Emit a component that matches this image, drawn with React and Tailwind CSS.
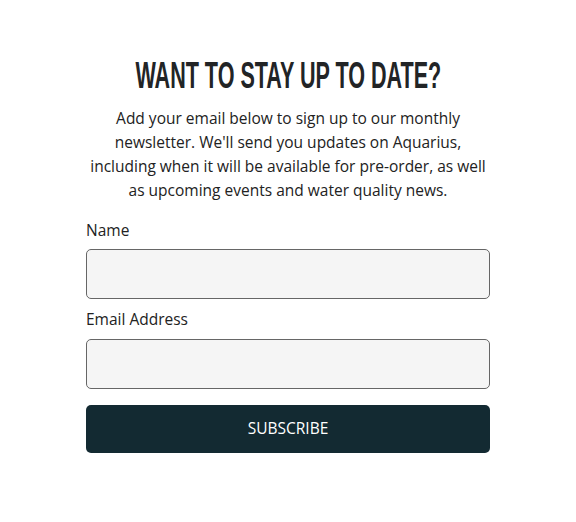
export default function App() {
  return (
    <div className="w-[576px] h-[522px] bg-white flex justify-center">
      <div className="w-[404px] pt-[55px] flex flex-col items-stretch font-['Open_Sans',sans-serif] text-[#222]">
        <div className="flex justify-center h-[40px]">
          <h2 className="whitespace-nowrap text-[37.7px] leading-[40px] font-bold text-[#222426] font-['Liberation_Sans',Arial,sans-serif] scale-x-[0.572]">
            WANT TO STAY UP TO DATE?
          </h2>
        </div>
        <p className="mt-[11px] text-center text-[15.5px] leading-[24px] px-[2px]">
          Add your email below to sign up to our monthly newsletter. We'll send you updates on Aquarius, including when it will be available for pre-order, as well as upcoming events and water quality news.
        </p>
        <label className="mt-[16px] text-[15.5px] leading-[24px]">Name</label>
        <input className="mt-[7px] h-[50px] rounded-[5px] border border-[#666] bg-[#f5f5f5]" />
        <label className="mt-[8px] text-[15.5px] leading-[24px]">Email Address</label>
        <input className="mt-[8px] h-[50px] rounded-[5px] border border-[#666] bg-[#f5f5f5]" />
        <button className="mt-[16px] h-[48px] rounded-[5px] bg-[#132a32] text-white text-[15.5px]">SUBSCRIBE</button>
      </div>
    </div>
  );
}
